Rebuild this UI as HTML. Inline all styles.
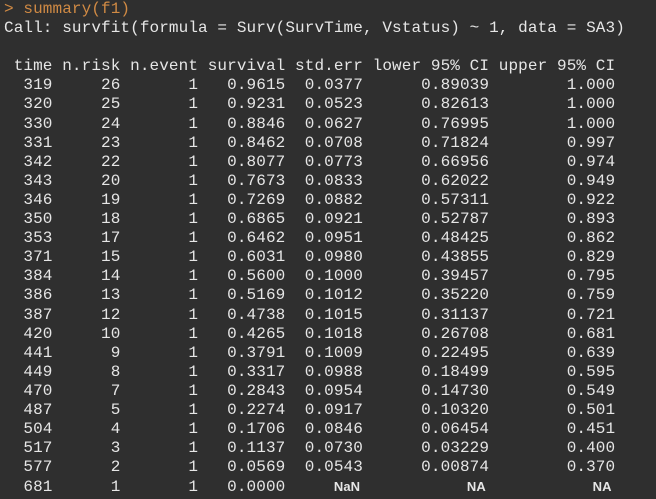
<!DOCTYPE html>
<html><head><style>
html,body{margin:0;padding:0;background:#2f2f2f;width:656px;height:499px;overflow:hidden}
pre{margin:0;position:absolute;left:4px;top:0px;font-family:"Liberation Mono",monospace;font-size:16px;line-height:19.1px;color:#e6e6e6;letter-spacing:0.1px}
.o{color:#d08a44}
b{font-size:13px;font-family:"Liberation Sans",sans-serif;font-weight:bold}
</style></head><body>
<pre><span class="o">&gt; summary(f1)</span>
Call: survfit(formula = Surv(SurvTime, Vstatus) ~ 1, data = SA3)

 time n.risk n.event survival std.err lower 95% CI upper 95% CI
  319     26       1   0.9615  0.0377      0.89039        1.000
  320     25       1   0.9231  0.0523      0.82613        1.000
  330     24       1   0.8846  0.0627      0.76995        1.000
  331     23       1   0.8462  0.0708      0.71824        0.997
  342     22       1   0.8077  0.0773      0.66956        0.974
  343     20       1   0.7673  0.0833      0.62022        0.949
  346     19       1   0.7269  0.0882      0.57311        0.922
  350     18       1   0.6865  0.0921      0.52787        0.893
  353     17       1   0.6462  0.0951      0.48425        0.862
  371     15       1   0.6031  0.0980      0.43855        0.829
  384     14       1   0.5600  0.1000      0.39457        0.795
  386     13       1   0.5169  0.1012      0.35220        0.759
  387     12       1   0.4738  0.1015      0.31137        0.721
  420     10       1   0.4265  0.1018      0.26708        0.681
  441      9       1   0.3791  0.1009      0.22495        0.639
  449      8       1   0.3317  0.0988      0.18499        0.595
  470      7       1   0.2843  0.0954      0.14730        0.549
  487      5       1   0.2274  0.0917      0.10320        0.501
  504      4       1   0.1706  0.0846      0.06454        0.451
  517      3       1   0.1137  0.0730      0.03229        0.400
  577      2       1   0.0569  0.0543      0.00874        0.370
  681      1       1   0.0000     <b>NaN</b>           <b>NA</b>           <b>NA</b></pre>
</body></html>
